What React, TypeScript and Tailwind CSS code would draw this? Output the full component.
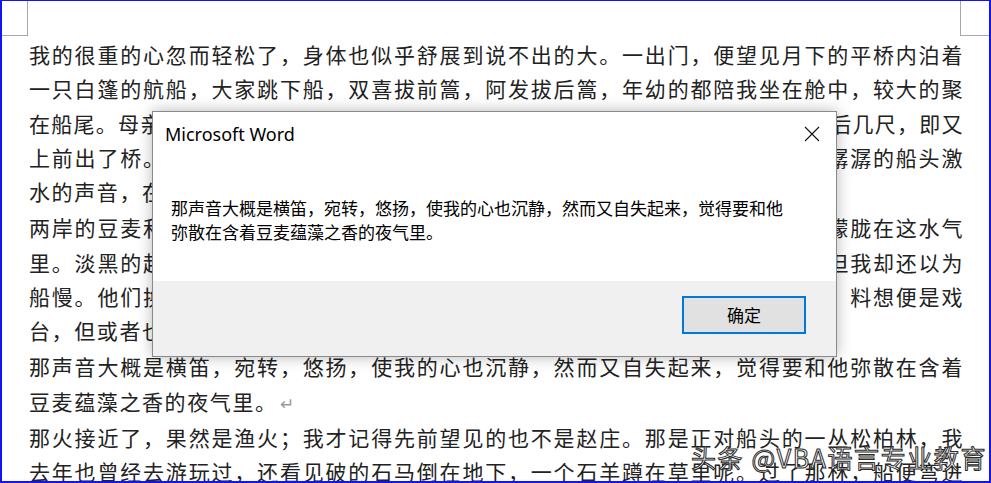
import React from 'react';

const lines: { text: string; end?: boolean }[] = [
  { text: '我的很重的心忽而轻松了，身体也似乎舒展到说不出的大。一出门，便望见月下的平桥内泊着' },
  { text: '一只白篷的航船，大家跳下船，双喜拔前篙，阿发拔后篙，年幼的都陪我坐在舱中，较大的聚' },
  { text: '在船尾。母亲送出来吩咐“要小心”的时候，我们已经点开船，在桥石上一磕，退后几尺，即又' },
  { text: '上前出了桥。于是架起两支橹，一支两人，一里一换，有说笑的，有嚷的，夹着潺潺的船头激' },
  { text: '水的声音，在左右都是碧绿的豆麦田地的河流中，飞一般径向赵庄前进了。', end: true },
  { text: '两岸的豆麦和河底的水草所发散出来的清香，夹杂在水气中扑面的吹来；月色便朦胧在这水气' },
  { text: '里。淡黑的起伏的连山，仿佛是踊跃的铁的兽脊似的，都远远地向船尾跑去了，但我却还以为' },
  { text: '船慢。他们换了四回手，渐望见依稀的赵庄，而且似乎听到歌吹了，还有几点火，料想便是戏' },
  { text: '台，但或者也许是渔火。', end: true },
  { text: '那声音大概是横笛，宛转，悠扬，使我的心也沉静，然而又自失起来，觉得要和他弥散在含着' },
  { text: '豆麦蕴藻之香的夜气里。', end: true },
  { text: '那火接近了，果然是渔火；我才记得先前望见的也不是赵庄。那是正对船头的一丛松柏林，我' },
  { text: '去年也曾经去游玩过，还看见破的石马倒在地下，一个石羊蹲在草里呢。过了那林，船便弯进' },
];

function CloseIcon() {
  return (
    <svg width="16" height="16" viewBox="0 0 16 16" className="block">
      <path d="M1 1 L15 15 M15 1 L1 15" stroke="#111" strokeWidth="1.1" fill="none" />
    </svg>
  );
}

function MessageBox() {
  return (
    <div className="absolute left-[150px] top-[110px] w-[685px] h-[246px] flex flex-col bg-white border border-[#8a8a8a] shadow-[0_0_14px_rgba(0,0,0,0.28)]">
      <div className="flex items-center justify-between h-[42px] pl-[12px] pr-[16px] pt-[1px]">
        <span className="text-[18px] leading-none text-black font-['Noto_Sans','Open_Sans',sans-serif]">Microsoft Word</span>
        <CloseIcon />
      </div>
      <div className="flex-1 pl-[18px] pt-[42px] text-[17px] leading-[24px] text-black font-['Noto_Sans_CJK_SC',sans-serif]">
        <div>那声音大概是横笛，宛转，悠扬，使我的心也沉静，然而又自失起来，觉得要和他</div>
        <div>弥散在含着豆麦蕴藻之香的夜气里。</div>
      </div>
      <div className="h-[75px] bg-[#f0f0f0] flex justify-end items-start pt-[15px] pr-[30px]">
        <button className="w-[124px] h-[38px] border-2 border-[#0078d7] bg-[#e1e1e1] text-[17px] text-black font-['Noto_Sans_CJK_SC',sans-serif]">
          确定
        </button>
      </div>
    </div>
  );
}

export default function App() {
  return (
    <div className="relative w-[991px] h-[483px] overflow-hidden bg-white border-x-2 border-b-2 border-t border-[#1414f0]">
      <div className="flex justify-between h-[35px]">
        <div className="w-[26px] h-full border-r border-b border-[#a8a8a8]" />
        <div className="w-[29px] h-full border-l border-b border-[#a8a8a8]" />
      </div>
      <div className="pl-[27px] pt-[1px] w-[961px] text-[21px] leading-[34.25px] text-[#222] font-['Noto_Sans_CJK_SC',sans-serif]">
        {lines.map((l, i) =>
          l.end ? (
            <div key={i} className="whitespace-nowrap tracking-[1.6px]">
              {l.text}
              <span className="text-[#9a9a9a] text-[17px] ml-[2px]">↵</span>
            </div>
          ) : (
            <div key={i} className="tracking-[0.6px] text-justify [text-align-last:justify]">
              {l.text}
            </div>
          )
        )}
      </div>
      <MessageBox />
      <div className="absolute left-[689px] top-[444px] text-[25px] leading-none tracking-[1.6px] text-white [-webkit-text-stroke:1px_#2a2a2a] font-['Noto_Sans_CJK_SC',sans-serif]">
        头条 @VBA语言专业教育
      </div>
    </div>
  );
}
